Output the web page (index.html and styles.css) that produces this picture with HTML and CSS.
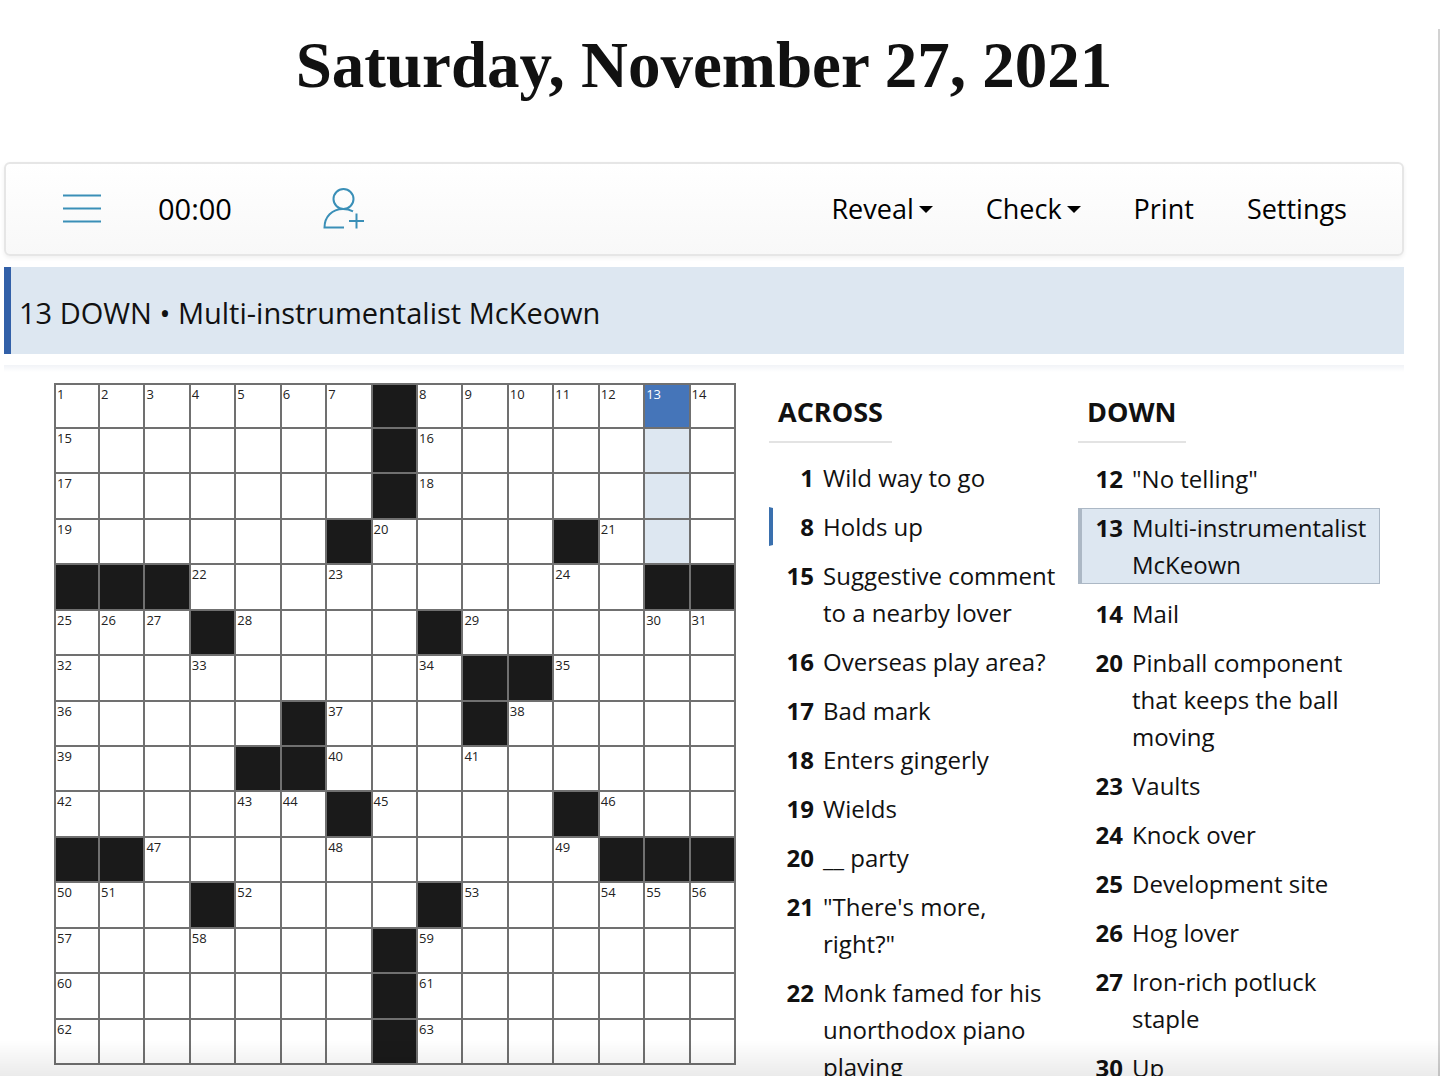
FILE: index.html
```html
<!DOCTYPE html>
<html lang="en">
<head>
<meta charset="utf-8">
<title>Crossword</title>
<link rel="stylesheet" href="styles.css">
</head>
<body>
<main class="page">
  <h1 class="title">Saturday, November 27, 2021</h1>

  <nav class="toolbar" aria-label="Puzzle tools">
    <button class="tool" type="button" aria-label="Menu">
      <svg class="icon" width="40" height="42" viewBox="0 0 40 42"><path d="M1 8.500h38M1 21.500h38M1 34.500h38"/></svg>
    </button>
    <time class="timer">00:00</time>
    <button class="tool" type="button" aria-label="Invite a friend">
      <svg class="icon" width="42" height="42" viewBox="0 0 42 42"><circle cx="20.500" cy="12" r="10"/><path d="M21 40.500H1.500C1.500 30 9 22 20 22c4 0 7 .8 10 2.300M33.500 26.500v15M26 34h15"/></svg>
    </button>
    <div class="actions">
      <button class="tool" type="button">Reveal<span class="caret"></span></button>
      <button class="tool" type="button">Check<span class="caret"></span></button>
      <button class="tool" type="button">Print</button>
      <button class="tool" type="button">Settings</button>
    </div>
  </nav>

  <p class="current-clue">13 DOWN • Multi-instrumentalist McKeown</p>

  <div class="play">
    <div class="board" id="board"></div>
    <div class="clues">
      <section class="clue-column">
        <h2 class="clue-heading">ACROSS</h2>
        <ol class="clue-list">
          <li class="clue"><b>1</b><span>Wild way to go</span></li>
          <li class="clue crossing"><b>8</b><span>Holds up</span></li>
          <li class="clue"><b>15</b><span>Suggestive comment to a nearby lover</span></li>
          <li class="clue"><b>16</b><span>Overseas play area?</span></li>
          <li class="clue"><b>17</b><span>Bad mark</span></li>
          <li class="clue"><b>18</b><span>Enters gingerly</span></li>
          <li class="clue"><b>19</b><span>Wields</span></li>
          <li class="clue"><b>20</b><span>__ party</span></li>
          <li class="clue"><b>21</b><span>"There's more, right?"</span></li>
          <li class="clue"><b>22</b><span>Monk famed for his unorthodox piano playing</span></li>
        </ol>
      </section>
      <section class="clue-column">
        <h2 class="clue-heading">DOWN</h2>
        <ol class="clue-list down">
          <li class="clue"><b>12</b><span>"No telling"</span></li>
          <li class="clue selected"><b>13</b><span>Multi-instrumentalist McKeown</span></li>
          <li class="clue"><b>14</b><span>Mail</span></li>
          <li class="clue"><b>20</b><span>Pinball component that keeps the ball moving</span></li>
          <li class="clue"><b>23</b><span>Vaults</span></li>
          <li class="clue"><b>24</b><span>Knock over</span></li>
          <li class="clue"><b>25</b><span>Development site</span></li>
          <li class="clue"><b>26</b><span>Hog lover</span></li>
          <li class="clue"><b>27</b><span>Iron-rich potluck staple</span></li>
          <li class="clue"><b>30</b><span>Up</span></li>
        </ol>
      </section>
    </div>
  </div>
</main>
<div class="fade"></div>
<script src="board.js"></script>
</body>
</html>
```
FILE: styles.css
```css
* { box-sizing: border-box; }

body {
  margin: 0;
  padding-top: 29px;
  height: 100vh;
  overflow: hidden;
  display: flex;
  flex-direction: column;
  background: #fff;
  color: #111;
  font-family: "Open Sans", "Noto Sans", sans-serif;
}

.page {
  flex: 1;
  min-height: 0;
  display: flex;
  flex-direction: column;
  padding: 0 34px 0 4px;
  border-right: 2px solid #d2d2d2;
}

.title {
  margin: 0 0 61px;
  font: bold 65px/72px "Liberation Serif", serif;
  text-align: center;
}

.toolbar {
  display: flex;
  align-items: center;
  height: 94px;
  flex: none;
  padding: 0 55px 2px 56px;
  border: 2px solid #e6e6e6;
  border-radius: 6px;
  background: linear-gradient(#fff, #f8f8f8);
  box-shadow: 0 2px 4px #f0f0f0;
  color: #000;
  font-size: 27px;
}

.tool {
  display: flex;
  align-items: center;
  padding: 0;
  border: 0;
  background: none;
  color: inherit;
  font: inherit;
  cursor: pointer;
}

.icon {
  display: block;
  fill: none;
  stroke: #3a8fb7;
  stroke-width: 2;
}

.timer {
  margin: 0 91px 0 56px;
  font-size: 29px;
}

.actions {
  display: flex;
  gap: 53px;
  margin-left: auto;
}

.caret {
  margin: 3px 0 0 5px;
  border: 7px solid transparent;
  border-top-color: #000;
  border-bottom: 0;
}

.current-clue {
  margin: 11px 0 0;
  padding: 26px 8px 21px;
  border-left: 7px solid #3260a8;
  background: #dde7f1;
  font-size: 29px;
  line-height: 40px;
}

.play {
  flex: 1;
  min-height: 0;
  display: flex;
  align-items: flex-start;
  gap: 33px;
  margin-top: 11px;
  padding: 18px 24px 0 50px;
  background: linear-gradient(#f1f3f7, #fff) top / 100% 7px no-repeat;
}

.board {
  flex: 0 0 682px;
  display: grid;
  grid-template-columns: 42px repeat(14, 1fr);
  grid-template-rows: 42px repeat(14, 1fr);
  gap: 2px;
  aspect-ratio: 1;
  padding: 2px;
  background: #707070;
}

.cell {
  display: flex;
  align-items: flex-start;
  min-width: 0;
  min-height: 0;
  padding: 0 1px;
  border: 0;
  background: #fff;
  color: #222;
  font: 13px/18px "Open Sans", sans-serif;
}

.cell.block { background: #1a1a1a; }
.cell.in-word { background: #dde7f1; }
.cell.cursor { background: #4575b9; color: #fff; }

.clues {
  flex: 1;
  align-self: stretch;
  min-height: 0;
  display: grid;
  grid-template-columns: 1fr 1fr;
  gap: 7px;
}

.clue-column {
  display: flex;
  flex-direction: column;
  align-items: flex-start;
  min-height: 0;
}

.clue-heading {
  margin: 9px 0 0;
  padding: 0 9px 9px;
  border-bottom: 2px solid #e3e3e3;
  font-size: 27px;
  line-height: 40px;
}

.clue-list {
  flex: 1;
  min-height: 0;
  width: 100%;
  margin: 0;
  padding: 15px 0 0;
  overflow-y: auto;
  scrollbar-width: none;
  list-style: none;
}

.clue-list.down { padding-top: 16px; }

.clue {
  display: grid;
  grid-template-columns: 41px 1fr;
  gap: 9px;
  margin-bottom: 10px;
  padding-right: 10px;
  border: 1px solid transparent;
  border-left-width: 4px;
  font-size: 24px;
  line-height: 37px;
}

.clue b { text-align: right; }
.clue.crossing { border-left-color: #3a70ae; }
.clue.selected { border-color: #acb8c5; background: #dde7f1; }

.fade {
  position: fixed;
  inset: auto 0 0;
  height: 36px;
  background: linear-gradient(transparent, rgba(0, 0, 0, 0.08));
  pointer-events: none;
}
```
FILE: board.js
```js
const rows = [
  ".......#.......",
  ".......#.......",
  ".......#.......",
  "......#....#...",
  "###..........##",
  "...#....#......",
  ".........##....",
  ".....#...#.....",
  "....##.........",
  "......#....#...",
  "##..........###",
  "...#....#......",
  ".......#.......",
  ".......#.......",
  ".......#......."
];
const board = document.getElementById("board");
const open = (r, c) => rows[r] !== undefined && rows[r][c] === ".";
let number = 0;

rows.forEach((row, r) => {
  [...row].forEach((mark, c) => {
    if (mark === "#") {
      const block = document.createElement("div");
      block.className = "cell block";
      board.append(block);
      return;
    }
    const cell = document.createElement("button");
    cell.type = "button";
    cell.className = "cell";
    cell.setAttribute("aria-label", `Row ${r + 1}, column ${c + 1}`);
    if (!open(r, c - 1) || !open(r - 1, c)) cell.textContent = ++number;
    if (c === 13 && r < 4) cell.classList.add(r === 0 ? "cursor" : "in-word");
    board.append(cell);
  });
});
```
